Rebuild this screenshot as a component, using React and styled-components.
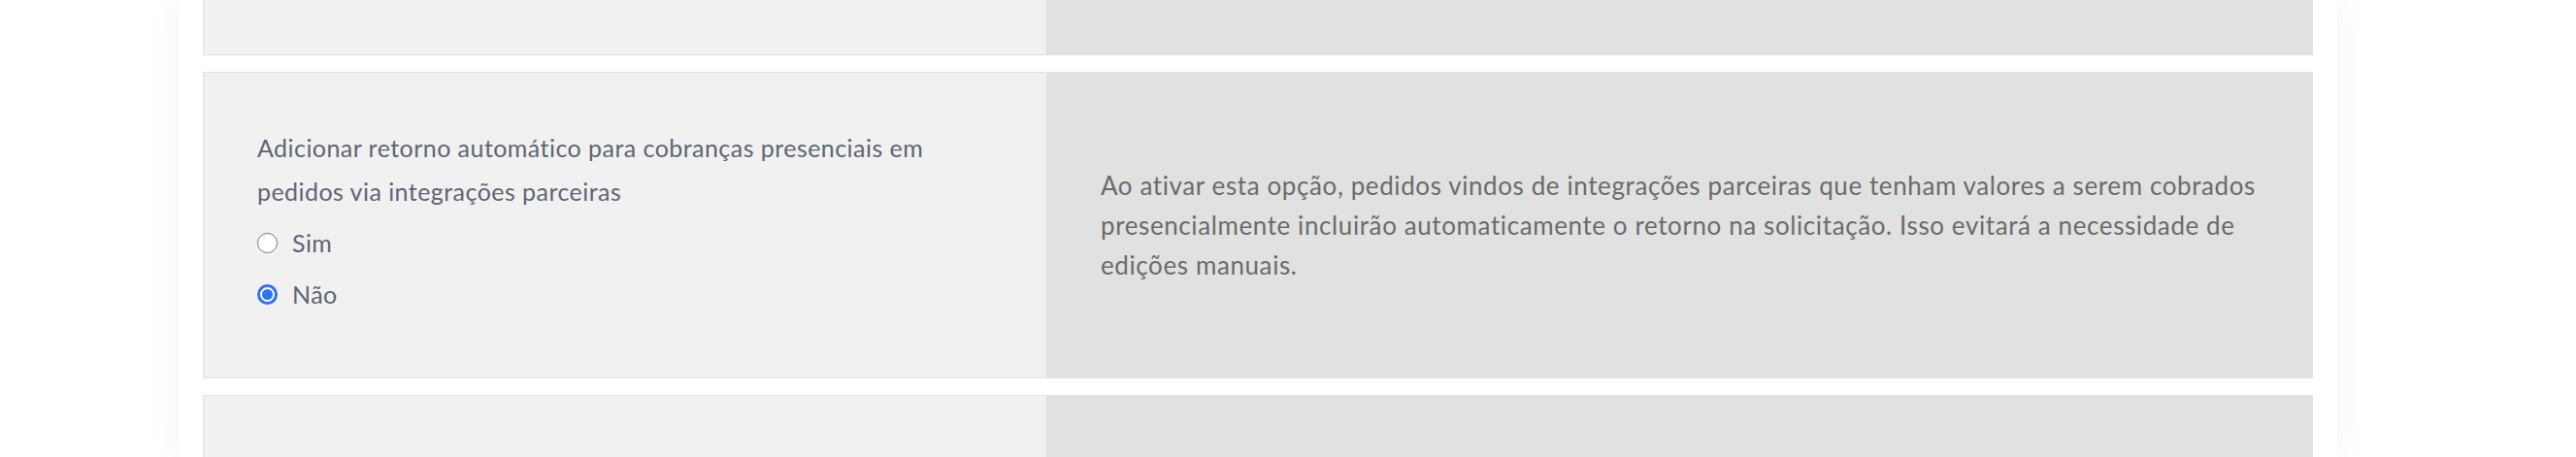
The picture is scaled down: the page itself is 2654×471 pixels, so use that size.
import React from 'react';
import styled, { createGlobalStyle } from 'styled-components';

const GlobalStyle = createGlobalStyle`
  html, body {
    margin: 0;
    padding: 0;
    background: #ffffff;
    overflow: hidden;
  }
  body {
    font-family: Lato, "Noto Sans", sans-serif;
  }
`;

const Page = styled.div`
  width: 2224px;
  height: 471px;
  margin-left: 184px;
  padding: 0 25px;
  box-sizing: border-box;
  background: #ffffff;
  box-shadow: 0 0 32px rgba(0, 0, 0, 0.06);
  display: flex;
  flex-direction: column;
  gap: 17px;
  overflow: hidden;
`;

const Card = styled.div`
  display: flex;
  flex-shrink: 0;
  height: ${(p) => p.$height}px;
  box-sizing: border-box;
  border: 1px solid #e2e2e2;
  border-top: ${(p) => (p.$cutTop ? 'none' : '1px solid #e2e2e2')};
  border-bottom: ${(p) => (p.$cutBottom ? 'none' : '1px solid #e2e2e2')};
  border-right: none;
`;

const Left = styled.div`
  width: 868px;
  flex-shrink: 0;
  background: #f1f1f1;
  padding: 0 55px 8px;
  box-sizing: border-box;
  display: flex;
  flex-direction: column;
  justify-content: center;
  gap: 8px;
`;

const Right = styled.div`
  flex: 1;
  background: #e1e1e1;
  padding: 0 56px;
  box-sizing: border-box;
  display: flex;
  align-items: center;
`;

const Label = styled.div`
  font-size: 25px;
  line-height: 45px;
  letter-spacing: 0.45px;
  color: #5e6572;
`;

const Option = styled.label`
  display: flex;
  align-items: center;
  gap: 15px;
  font-size: 25px;
  line-height: 45px;
  letter-spacing: 0.45px;
  color: #5e6572;
`;

const Radio = styled.span`
  width: 21px;
  height: 21px;
  border-radius: 50%;
  box-sizing: border-box;
  background: #ffffff;
  border: ${(p) => (p.$checked ? '3px solid #2f73ef' : '1.5px solid #767676')};
  display: flex;
  align-items: center;
  justify-content: center;
  &::after {
    content: '';
    display: ${(p) => (p.$checked ? 'block' : 'none')};
    width: 11px;
    height: 11px;
    border-radius: 50%;
    background: #2f73ef;
  }
`;

const Help = styled.p`
  margin: 0;
  font-size: 26px;
  line-height: 41px;
  letter-spacing: 0.6px;
  color: #6b6b6b;
`;

export default function App() {
  return (
    <>
      <GlobalStyle />
      <Page>
        <Card $height={57} $cutTop>
          <Left />
          <Right />
        </Card>
        <Card $height={316}>
          <Left>
            <Label>
              Adicionar retorno automático para cobranças presenciais em pedidos via integrações parceiras
            </Label>
            <Option>
              <Radio />
              Sim
            </Option>
            <Option>
              <Radio $checked />
              Não
            </Option>
          </Left>
          <Right>
            <Help>
              Ao ativar esta opção, pedidos vindos de integrações parceiras que tenham valores a serem cobrados
              presencialmente incluirão automaticamente o retorno na solicitação. Isso evitará a necessidade de
              edições manuais.
            </Help>
          </Right>
        </Card>
        <Card $height={200} $cutBottom>
          <Left />
          <Right />
        </Card>
      </Page>
    </>
  );
}
